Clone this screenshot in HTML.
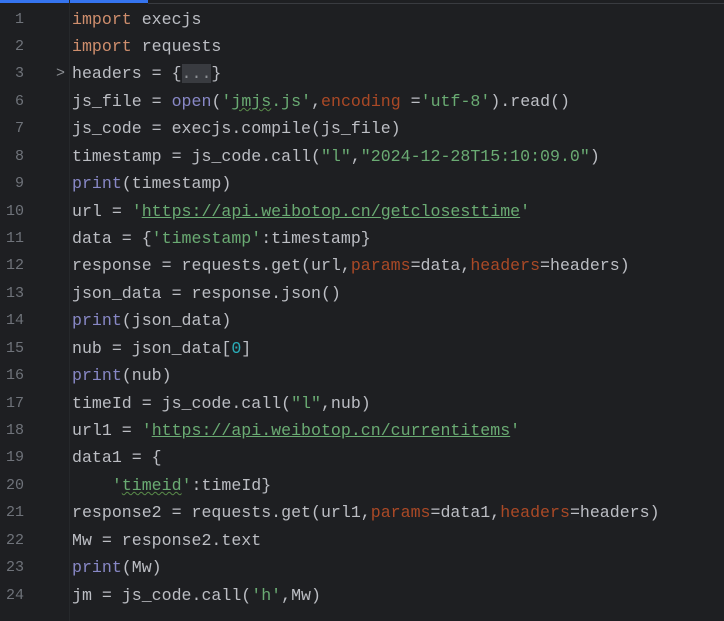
<html style="overflow:hidden"><head><style>
body{margin:0;width:724px;height:621px;background:#1e1f22;overflow:hidden;font-family:"Liberation Mono",monospace;font-size:16.6px;color:#bcbec4;position:relative}
.bar{position:absolute;left:0;top:0;width:148px;height:3px;background:#3574f0}
.topline{position:absolute;left:148px;top:3px;width:576px;height:1px;background:#393b40}
.sep{position:absolute;left:69px;top:0;width:1px;height:621px;background:#26282b}
.l{position:absolute;left:0;height:27.43px;line-height:27.43px;white-space:pre;width:724px}
.n{position:absolute;left:0;width:24px;text-align:right;color:#6f737a;font-size:15px}
.c{position:absolute;left:72px}
.k{color:#cf8e6d}.s{color:#6aab73}.b{color:#8888c6}.p{color:#aa4926}.d{color:#2aacb8}
.u{text-decoration:underline}
.w{text-decoration:underline wavy #5a8c4a;text-decoration-thickness:1px}
.f{background:#393b40;color:#8c8f94}
.arr{position:absolute;left:56px;color:#8c8f94;font-size:15px}
</style></head><body>
<div class="bar"></div><div class="topline"></div><div class="sep"></div>
<div class="l" style="top:5.5px"><span class="n">1</span><span class="c"><span class="k">import</span> execjs</span></div>
<div class="l" style="top:33px"><span class="n">2</span><span class="c"><span class="k">import</span> requests</span></div>
<div class="l" style="top:60.4px"><span class="n">3</span><span class="arr">&gt;</span><span class="c">headers = {<span class="f">...</span>}</span></div>
<div class="l" style="top:87.8px"><span class="n">6</span><span class="c">js_file = <span class="b">open</span>(<span class="s">'<span class="w">jmjs</span>.js'</span>,<span class="p">encoding</span> =<span class="s">'utf-8'</span>).read()</span></div>
<div class="l" style="top:115.2px"><span class="n">7</span><span class="c">js_code = execjs.compile(js_file)</span></div>
<div class="l" style="top:142.6px"><span class="n">8</span><span class="c">timestamp = js_code.call(<span class="s">"l"</span>,<span class="s">"2024-12-28T15:10:09.0"</span>)</span></div>
<div class="l" style="top:170.1px"><span class="n">9</span><span class="c"><span class="b">print</span>(timestamp)</span></div>
<div class="l" style="top:197.5px"><span class="n">10</span><span class="c">url = <span class="s">'<span class="u">https://api.weibotop.cn/getclosesttime</span>'</span></span></div>
<div class="l" style="top:224.9px"><span class="n">11</span><span class="c">data = {<span class="s">'timestamp'</span>:timestamp}</span></div>
<div class="l" style="top:252.4px"><span class="n">12</span><span class="c">response = requests.get(url,<span class="p">params</span>=data,<span class="p">headers</span>=headers)</span></div>
<div class="l" style="top:279.8px"><span class="n">13</span><span class="c">json_data = response.json()</span></div>
<div class="l" style="top:307.2px"><span class="n">14</span><span class="c"><span class="b">print</span>(json_data)</span></div>
<div class="l" style="top:334.7px"><span class="n">15</span><span class="c">nub = json_data[<span class="d">0</span>]</span></div>
<div class="l" style="top:362.1px"><span class="n">16</span><span class="c"><span class="b">print</span>(nub)</span></div>
<div class="l" style="top:389.5px"><span class="n">17</span><span class="c">timeId = js_code.call(<span class="s">"l"</span>,nub)</span></div>
<div class="l" style="top:416.9px"><span class="n">18</span><span class="c">url1 = <span class="s">'<span class="u">https://api.weibotop.cn/currentitems</span>'</span></span></div>
<div class="l" style="top:444.4px"><span class="n">19</span><span class="c">data1 = {</span></div>
<div class="l" style="top:471.8px"><span class="n">20</span><span class="c">    <span class="s">'<span class="w">timeid</span>'</span>:timeId}</span></div>
<div class="l" style="top:499.2px"><span class="n">21</span><span class="c">response2 = requests.get(url1,<span class="p">params</span>=data1,<span class="p">headers</span>=headers)</span></div>
<div class="l" style="top:526.6px"><span class="n">22</span><span class="c">Mw = response2.text</span></div>
<div class="l" style="top:554.1px"><span class="n">23</span><span class="c"><span class="b">print</span>(Mw)</span></div>
<div class="l" style="top:581.5px"><span class="n">24</span><span class="c">jm = js_code.call(<span class="s">'h'</span>,Mw)</span></div>
</body></html>
